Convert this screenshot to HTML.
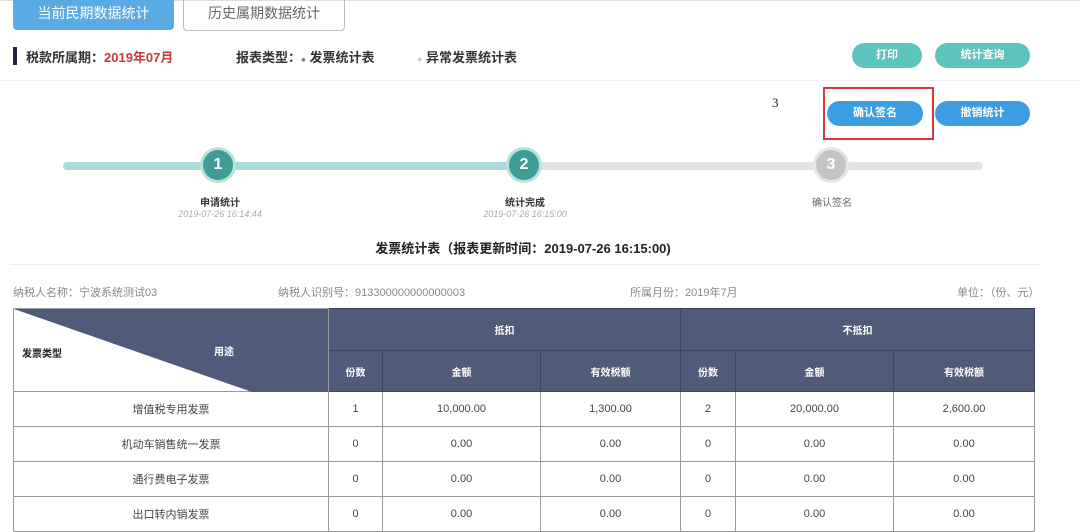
<!DOCTYPE html>
<html><head><meta charset="utf-8"><style>
body{margin:0;width:1080px;height:523px;background:#fff;position:relative;overflow:hidden;font-family:"Liberation Sans","Noto Sans CJK SC",sans-serif;}
.a{position:absolute;}
.btn{position:absolute;height:25px;border-radius:13px;color:#fff;font-size:11px;font-weight:bold;text-align:center;line-height:25px;}
.c{position:absolute;width:30px;height:30px;border-radius:50%;color:#fff;font-weight:bold;font-size:16px;text-align:center;line-height:30px;}
table{position:absolute;left:13px;top:308px;border-collapse:collapse;width:1022px;font-size:11px;color:#444;}
td,th{border:1px solid #999;text-align:center;padding:0;}
th{background:#4f5b78;color:#fff;font-size:10px;border-color:#3c4560;}
</style></head><body>
<div class="a" style="left:0;top:0;width:1080px;height:1px;background:#ddd"></div>
<div class="a" style="left:13px;top:0;width:161px;height:30px;background:#5aaae3;border-radius:0 0 4px 4px;color:#fff;font-size:14px;text-align:center;line-height:26px">当前民期数据统计</div>
<div class="a" style="left:183px;top:-1px;width:160px;height:30px;border:1px solid #bbb;border-radius:0 0 4px 4px;color:#666;font-size:14px;text-align:center;line-height:26px">历史属期数据统计</div>
<div class="a" style="left:13px;top:47px;width:4px;height:18px;background:#1d2550"></div>
<div class="a" style="left:26px;top:47px;font-size:13px;font-weight:bold;color:#333">税款所属期：<span style="color:#c9383a">2019年07月</span></div>
<div class="a" style="left:236px;top:47px;font-size:13px;font-weight:bold;color:#333">报表类型：<span style="font-size:8px;color:#777">●</span> 发票统计表</div>
<div class="a" style="left:417px;top:47px;font-size:13px;font-weight:bold;color:#333"><span style="font-size:9px;color:#ccc">●</span> 异常发票统计表</div>
<div class="a" style="left:0;top:80px;width:1080px;height:1px;background:#f0f0f0"></div>
<div class="btn" style="left:852px;top:43px;width:70px;background:#5cc3bd">打印</div>
<div class="btn" style="left:935px;top:43px;width:95px;background:#5cc3bd">统计查询</div>
<div class="btn" style="left:827px;top:101px;width:96px;background:#3b9ee2">确认签名</div>
<div class="btn" style="left:935px;top:101px;width:95px;background:#3b9ee2">撤销统计</div>
<div class="a" style="left:823px;top:87px;width:107px;height:49px;border:2px solid #d03a3a"></div>
<div class="a" style="left:772px;top:95px;font-size:13px;font-family:'Liberation Serif',serif;color:#222">3</div>
<div class="a" style="left:63px;top:162px;width:920px;height:8px;border-radius:4px;background:#e3e3e3"></div>
<div class="a" style="left:63px;top:162px;width:462px;height:8px;border-radius:4px;background:#a9dcd8"></div>
<div class="c" style="left:203px;top:150px;background:#3f9c96;box-shadow:0 0 0 3px #b8e2de">1</div>
<div class="c" style="left:509px;top:150px;background:#3f9c96;box-shadow:0 0 0 3px #b8e2de">2</div>
<div class="c" style="left:816px;top:150px;background:#c4c4c4;box-shadow:0 0 0 3px #e6e6e6">3</div>
<div class="a" style="left:160px;top:194px;width:120px;text-align:center;font-size:10px;font-weight:bold;color:#333">申请统计</div>
<div class="a" style="left:160px;top:209px;width:120px;text-align:center;font-size:9px;font-style:italic;color:#aaa">2019-07-26 16:14:44</div>
<div class="a" style="left:465px;top:194px;width:120px;text-align:center;font-size:10px;font-weight:bold;color:#333">统计完成</div>
<div class="a" style="left:465px;top:209px;width:120px;text-align:center;font-size:9px;font-style:italic;color:#aaa">2019-07-26 16:15:00</div>
<div class="a" style="left:772px;top:194px;width:120px;text-align:center;font-size:10px;color:#666">确认签名</div>
<div class="a" style="left:0;top:238px;width:1046px;text-align:center;font-size:13px;font-weight:bold;color:#222">发票统计表（报表更新时间：2019-07-26 16:15:00)</div>
<div class="a" style="left:10px;top:264px;width:1030px;height:1px;background:#eee"></div>
<div class="a" style="left:13px;top:284px;font-size:11px;color:#888">纳税人名称：宁波系统测试03</div>
<div class="a" style="left:278px;top:284px;font-size:11px;color:#888">纳税人识别号：913300000000000003</div>
<div class="a" style="left:630px;top:284px;font-size:11px;color:#888">所属月份：2019年7月</div>
<div class="a" style="left:957px;top:284px;font-size:11px;color:#888">单位：（份、元）</div>
<table>
<tr style="height:42px"><th rowspan="2" style="width:314px;position:relative;background:#fff;border-color:#999">
<svg width="314" height="83" style="position:absolute;left:0;top:0"><polygon points="0,0 314,0 314,83 238,83" fill="#4f5b78"/></svg>
<span style="position:absolute;left:8px;top:36px;color:#222;font-weight:bold">发票类型</span>
<span style="position:absolute;left:200px;top:34px;color:#fff;font-weight:bold">用途</span></th>
<th colspan="3">抵扣</th><th colspan="3">不抵扣</th></tr>
<tr style="height:41px"><th style="width:53px">份数</th><th style="width:157px">金额</th><th style="width:139px">有效税额</th><th style="width:54px">份数</th><th style="width:157px">金额</th><th>有效税额</th></tr>
<tr style="height:35px"><td>增值税专用发票</td><td>1</td><td>10,000.00</td><td>1,300.00</td><td>2</td><td>20,000.00</td><td>2,600.00</td></tr>
<tr style="height:35px"><td>机动车销售统一发票</td><td>0</td><td>0.00</td><td>0.00</td><td>0</td><td>0.00</td><td>0.00</td></tr>
<tr style="height:35px"><td>通行费电子发票</td><td>0</td><td>0.00</td><td>0.00</td><td>0</td><td>0.00</td><td>0.00</td></tr>
<tr style="height:35px"><td>出口转内销发票</td><td>0</td><td>0.00</td><td>0.00</td><td>0</td><td>0.00</td><td>0.00</td></tr>
</table>
</body></html>
